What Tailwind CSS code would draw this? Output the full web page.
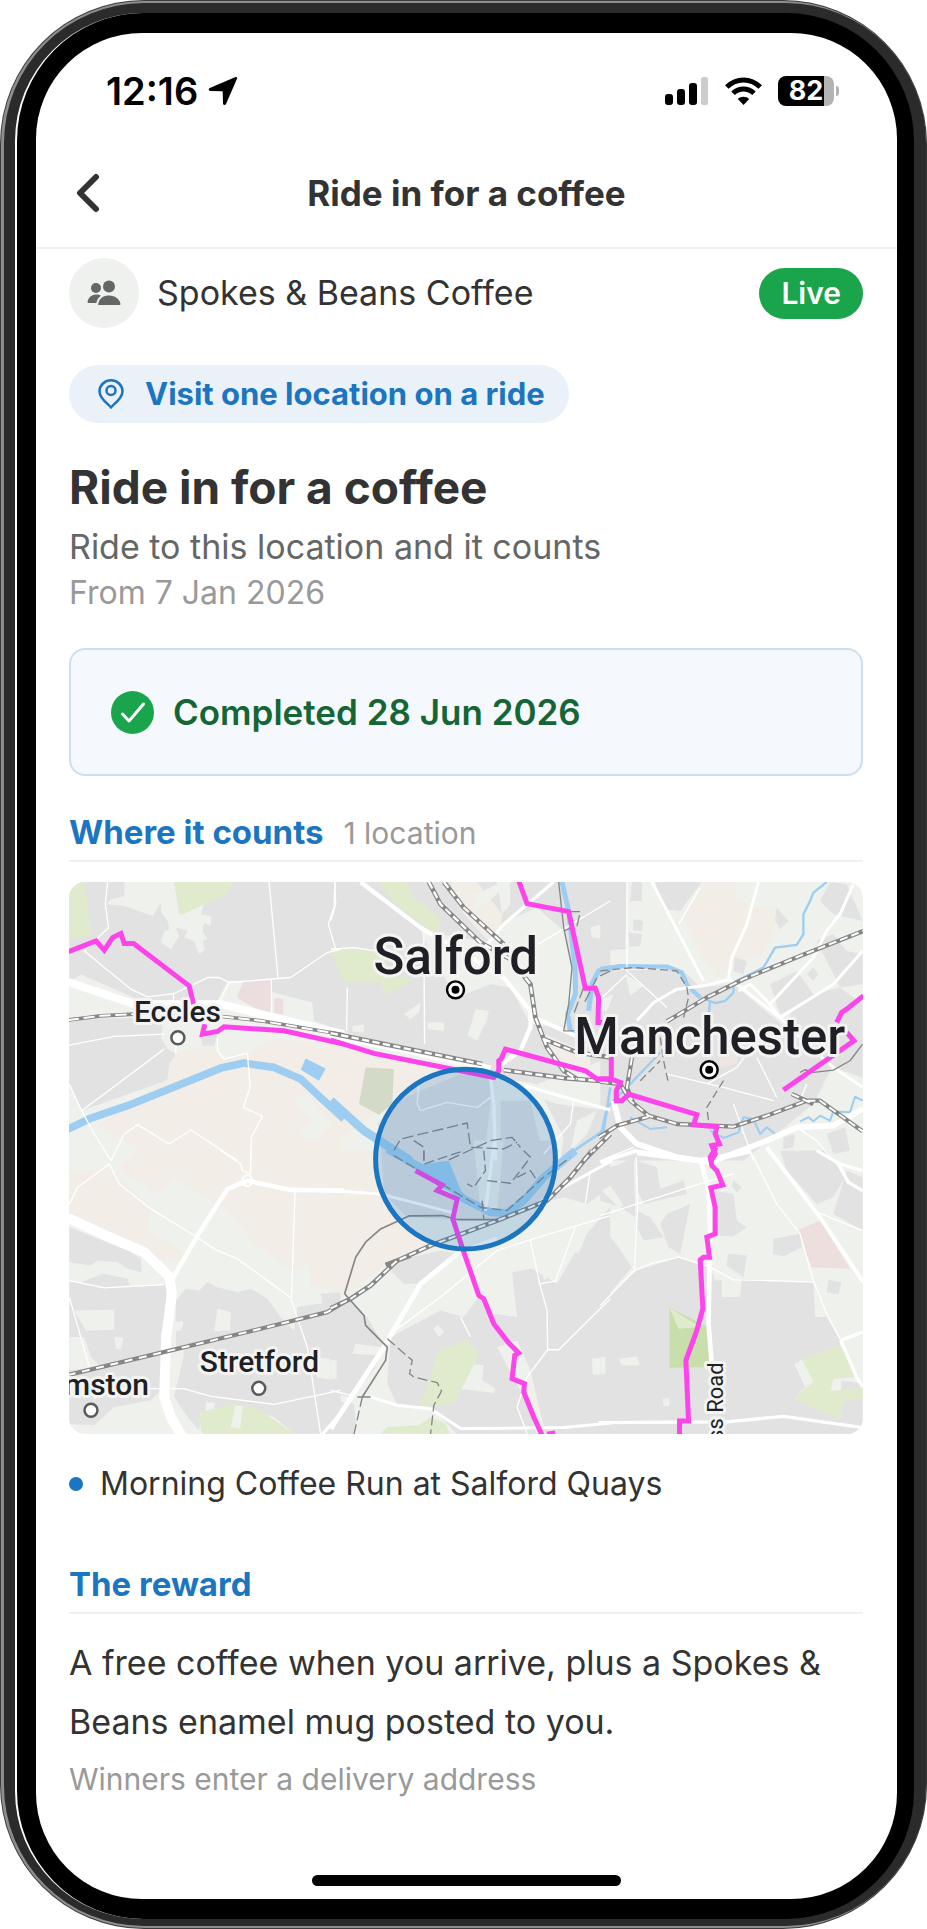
<!DOCTYPE html>
<html lang="en">

<head>
  <meta charset="UTF-8">
  <meta name="viewport" content="width=device-width, initial-scale=1.0">
  <title>Ride in for a coffee</title>
  <script src="https://cdn.jsdelivr.net/npm/@tailwindcss/browser@4"></script>
</head>

<body class="bg-white font-['Inter',sans-serif] text-[#333333]">
  <!-- phone frame, from the outer edge in -->
  <div class="flex min-h-screen rounded-[144px] bg-[#3c3c3c] p-px">
    <div class="flex flex-1 rounded-[143px] bg-[#8d8d8d] pt-[2px] pb-[2px] pl-[3px]">
      <div class="flex flex-1 rounded-[140px] bg-[#2b2b2b] pt-[10px] pr-3 pb-[7px] pl-[11px]">
        <div class="flex flex-1 rounded-[128px] border-l-2 border-white bg-black pt-5 pr-[17px] pb-5 pl-[19px]">
          <div class="flex w-full min-w-0 flex-col overflow-hidden rounded-[106px] bg-white">

            <div class="flex items-center justify-between pt-[34px] pr-[58px] pl-[70px] text-black">
              <div class="flex items-center gap-[10px]">
                <span class="text-[38px] leading-[48px] font-semibold">12:16</span>
                <svg class="h-[30px] w-[30px]" viewBox="0 0 30 30" fill="currentColor">
                  <path d="M27.500 1 C28.800.6 29.500 1.500 29 2.800 L18 28 C17.300 29.600 15.200 29.400 15 27.600 L14.700 16 C14.700 15.300 14.500 15.200 13.900 15.200 L2.400 15 C.4 15 .2 12.800 1.800 12.100 Z" />
                </svg>
              </div>
              <div class="flex items-center gap-4">
                <svg class="h-7 w-[44px]" viewBox="0 0 44 28">
                  <rect x="0" y="17" width="8" height="11" rx="3" />
                  <rect x="12" y="12" width="8" height="16" rx="3" />
                  <rect x="24" y="6" width="8" height="22" rx="3" />
                  <rect x="36" y="0" width="7" height="28" rx="2" fill="#cbcdc9" />
                </svg>
                <svg class="h-7 w-[37px]" viewBox="0 0 37 28" fill="none" stroke="#000" stroke-width="5">
                  <path d="M1.800 10 C11.500 .5 25.500 .5 35.200 10" />
                  <path d="M8 16.300 C14 10.500 23 10.500 29 16.300" />
                  <path d="M18.500 28 L12.800 22 C16 19 21 19 24.200 22 Z" fill="#000" stroke="none" />
                </svg>
                <div class="flex items-center gap-[2px]">
                  <div class="flex h-[30px] w-[56px] items-center justify-center rounded-lg bg-linear-to-r from-black from-83% to-[#b3b3b3] to-83%">
                    <span class="text-[27px] leading-[30px] font-bold text-white">82</span>
                  </div>
                  <span class="h-[10px] w-[3px] rounded-r-full bg-[#b3b3b3]"></span>
                </div>
              </div>
            </div>

            <header class="grid grid-cols-[80px_1fr_80px] items-center border-b-2 border-[#f0f1ec] pt-6">
              <button type="button" aria-label="Back" class="flex h-[108px] items-center pl-[40px]">
                <svg class="h-10 w-6" viewBox="0 0 24 40" fill="none" stroke="#333" stroke-width="6" stroke-linecap="round" stroke-linejoin="round">
                  <path d="M20 4 L4 20 L20 36" />
                </svg>
              </button>
              <p class="text-center text-[35px] leading-[48px] font-bold">Ride in for a coffee</p>
            </header>

            <main class="flex flex-col pt-[9px] pr-[34px] pl-[33px]">
              <div class="flex items-center justify-between">
                <div class="flex items-center gap-[18px]">
                  <span class="flex h-[70px] w-[70px] items-center justify-center rounded-full bg-[#eff1ee]">
                    <svg class="h-[26px] w-[34px]" viewBox="0 0 34 26" fill="#656766">
                      <circle cx="9" cy="8" r="5" />
                      <circle cx="22" cy="6.500" r="6" />
                      <path d="M11 25 C12 17.500 17 15.500 22 15.500 C28 15.500 32.500 19 33.500 24 Q33.500 25 32.500 25 Z" />
                      <path d="M.5 22 C1 17.500 5 14.500 9 14.500 C11 14.500 13 15 14 15.800 C11.500 17.500 10 19.800 9.300 23 H1.500 Q.5 23 .5 22 Z" />
                    </svg>
                  </span>
                  <p class="text-[34px] leading-[48px]">Spokes &amp; Beans Coffee</p>
                </div>
                <span class="flex h-[51px] items-center rounded-full bg-[#1aa44b] px-[22px] text-[30px] leading-[40px] font-semibold text-white">Live</span>
              </div>

              <div class="mt-[37px] flex h-[58px] items-center gap-[21px] self-start rounded-full bg-[#eaf1f9] pr-6 pl-[29px] text-[#1b75c0]">
                <svg class="h-[30px] w-[26px]" viewBox="0 0 26 30" fill="none" stroke="currentColor" stroke-width="2.500">
                  <path d="M13 28.300 C10 25 1.500 19.500 1.500 12.500 A11.500 11.300 0 0 1 24.500 12.500 C24.500 19.500 16 25 13 28.300 Z" />
                  <circle cx="13" cy="11.500" r="4.500" />
                </svg>
                <span class="text-[31px] leading-[40px] font-bold">Visit one location on a ride</span>
              </div>

              <h1 class="mt-9 text-[46px] leading-[56px] font-bold">Ride in for a coffee</h1>
              <p class="mt-2 text-[34px] leading-[48px] text-[#656766]">Ride to this location and it counts</p>
              <p class="text-[32px] leading-[44px] text-[#999999]">From 7 Jan 2026</p>

              <div class="mt-[33px] flex h-[128px] items-center gap-[19px] rounded-2xl border-2 border-[#cbdff0] bg-[#f5f9fd] px-10">
                <svg class="h-[43px] w-[43px]" viewBox="0 0 43 43">
                  <circle cx="21.500" cy="21.500" r="21.500" fill="#1aa44b" />
                  <path d="M11.500 23 L18 30 L32.500 13" fill="none" stroke="#fff" stroke-width="3" stroke-linecap="round" stroke-linejoin="round" />
                </svg>
                <p class="text-[35px] leading-[48px] font-semibold text-[#166534]">Completed 28 Jun 2026</p>
              </div>

              <div class="mt-7 flex items-baseline gap-5 border-b-2 border-[#f0f0ec]">
                <h2 class="text-[33px] leading-[56px] font-bold text-[#1b75c0]">Where it counts</h2>
                <span class="text-[30px] leading-[40px] text-[#999999]">1 location</span>
              </div>

              <div class="mt-5 overflow-hidden rounded-2xl">
                <svg class="block h-auto w-full bg-[#eef1ec]" viewBox="0 0 795 553" font-family="Roboto, sans-serif">
                  <defs>
                    <g id="areas-nw">
                      <path fill="#e2e2e2" d="M25 33H840V480L760 450 755 395 640 365 560 330 500 330 470 390 300 400 230 385 60 310 25 340Z" />
                      <path fill="#eef1ec" d="M190 33H340L355 130 430 100 420 130 450 135 450 165 430 155 425 180 440 205 425 210 432 235 415 250 400 210 370 200 380 180 345 170 355 195 330 235 300 215 310 180 325 175 320 150 300 120 300 95 275 135 190 105 135 100 150 85 190 75ZM25 330L60 315 120 365 160 375 220 410 25 440Z" />
                      <path fill="#e0ebcd" d="M25 33H70L92 190 25 205ZM340 33H520L490 75 360 132ZM800 245L840 235V320Z" />
                      <path fill="#e2e2e2" d="M25 445L300 440 305 475 300 500 320 535 345 548 330 600 330 625 62 720 25 640ZM420 495L470 490 460 525 425 525Z" />
                      <path fill="#f2ede6" d="M345 548L400 530 460 535 485 565 560 545 640 505 840 525V870H260L240 835 110 765 320 625 325 580Z" />
                      <path fill="#eef1ec" d="M700 690L740 660 780 720 820 760 760 820 715 790 750 750Z" />
                      <path fill="#ecdede" d="M530 370L550 330 632 325V425L590 415 535 385ZM640 382L668 384 668 430 640 428Z" />
                    </g>
                    <g id="areas-n">
                      <path fill="#e2e2e2" d="M0 33H840V560L620 640 500 620 0 470Z" />
                      <path fill="#f2ede6" d="M360 33H440L515 130 510 180 480 215 400 130Z" />
                      <path fill="#eef1ec" d="M480 215L530 150 620 110 700 180 730 330 720 470 600 460 540 350 480 340 380 380 330 300 270 180ZM500 33L540 33 540 100 515 130Z" />
                      <path fill="#e0ebcd" d="M140 33H225L250 80 330 140 322 180 300 182 190 95ZM0 240L70 230 160 250 180 315 245 320 240 335 165 372 150 335 40 335Z" />
                      <path fill="#eef1ec" d="M435 70L500 40 510 60 470 95 430 125ZM220 430L270 395 265 425 240 445ZM290 455H340V480L292 475ZM435 415L475 420 470 445 440 510 412 495ZM65 465L100 462 100 485 65 482ZM780 170L840 150V205L785 200Z" />
                      <path fill="#f2ede6" d="M0 510L390 610 200 690 120 740 0 830ZM620 480L780 550V600L700 610Z" />
                      <path fill="#d3dac8" d="M105 590L190 595 185 700 145 732 85 700Z" />
                      <path fill="#e2e2e2" d="M390 610L480 620 480 700 460 870H170L140 760 200 690ZM510 640L680 700 840 720V870H510Z" />
                      <path fill="#eef1ec" d="M480 610L620 645 700 800 690 870 640 860 600 690 510 690ZM740 750L800 720 770 790 720 840Z" />
                    </g>
                    <g id="areas-ne">
                      <path fill="#e2e2e2" d="M0 33H80L75 235 0 240ZM95 33H125V90H90ZM165 33H305L240 120 190 115ZM100 145L128 150 125 180 98 178ZM85 185L125 190 120 225 88 228Z" />
                      <path fill="#f2ede6" d="M310 33H410L400 80 470 110 530 115 525 180 490 250 430 265 350 320 310 260 250 140Z" />
                      <path fill="#e2e2e2" d="M0 300L200 295 260 310 300 350 400 340 520 440 620 520 700 580 640 700 430 870H0Z" />
                      <path fill="#e2e2e2" d="M530 110L565 150 540 175 525 150ZM405 260L440 270 430 310 400 300ZM690 33L740 40 788 150 700 130 660 90ZM650 210L700 190 740 240 788 250V340L720 350 690 290ZM510 340L590 300 640 370 580 410 540 430ZM620 310L640 290 655 310 640 330ZM600 380L720 350 788 400V620L730 600 640 560 560 450ZM680 790L735 770 750 840 700 850ZM550 800L585 790 580 830 550 835Z" />
                      <path fill="#ece7e3" d="M350 460L420 500 410 580 360 590Z" />
                      <path fill="#eef1ec" d="M75 310L130 345 90 375ZM0 385L40 370 20 420 0 420Z" />
                    </g>
                    <g id="areas-sw">
                      <path fill="#f2ede6" d="M170 50L260 -30 840 -30V425L750 405V335L690 360 570 270 520 200 470 160 340 85 290 130ZM25 70L140 50 210 110 270 180 260 235 365 305 360 330 280 325 25 190Z" />
                      <path fill="#eef1ec" d="M340 85L290 140 265 235 400 270Z" />
                      <path fill="#e2e2e2" d="M25 230L200 300 240 325 242 365 200 355 170 335 110 330 90 345 25 335ZM25 390L60 395 125 370 200 385 205 405 315 400 318 460 300 560V720L270 750 160 770 100 825 25 822ZM345 450L375 415 415 420 440 395 470 410 530 425 570 415 620 445 660 500 700 540 710 470 840 450V852H700L640 800 520 760 420 790 415 840 380 800 340 740 350 690 370 600 345 590ZM780 430L840 425V450L785 460Z" />
                      <path fill="#eef1ec" d="M40 480L160 478V538L75 540ZM25 560L70 560 90 620 120 650 25 660ZM470 475L510 485 508 540 460 542ZM335 515L368 512 362 540 335 542ZM768 620L830 630 825 690 768 682ZM325 620L370 612 350 697 325 700ZM160 560L187 562 180 598 165 595ZM435 755L462 757 460 785 435 785Z" />
                      <path fill="#e0ebcd" d="M412 800L440 780 525 760 600 780 700 852H425Z" />
                      <path fill="#eef1ec" d="M523 765L545 768 538 835 510 830Z" />
                    </g>
                    <g id="areas-s">
                      <path fill="#f2ede6" d="M0 0H150L160 120 200 200 310 270 180 330 50 430 0 425Z" />
                      <path fill="#e2e2e2" d="M150 -30L680 -30 660 150 520 205 410 210 230 200 160 130ZM0 480L60 450 110 500 160 590 130 660 60 740 0 725ZM200 330L330 300 380 310 270 400 220 400 180 360ZM400 500L445 440 490 490 560 500 545 365 605 355 680 400 760 260 840 170V852H380L300 770 200 765 170 700 180 560 330 480ZM700 0H840V110L770 160 700 140 660 150ZM0 750L70 760 75 815 70 852H0Z" />
                      <path fill="#eef1ec" d="M430 -30L520 -30 500 180 450 180ZM420 640L460 645 455 690 495 715 490 728 390 715ZM785 625L823 622 825 673 787 673ZM308 535L322 523 342 545 325 560ZM630 300L690 290 695 350 640 390ZM195 787L243 790 248 852H195ZM500 590L560 570 600 660 640 830 620 852 580 740ZM710 250L775 235 745 310 710 290ZM75 580L150 590 145 615 65 610ZM0 630H18V685H0ZM440 370Q470 350 478 375L455 410Z" />
                      <path fill="#e0ebcd" d="M320 605L408 567 447 610 370 760 265 770 300 680ZM150 850L170 830 265 825 300 800 345 820 358 852Z" />
                    </g>
                    <g id="areas-se">
                      <path fill="#e2e2e2" d="M0 60L60 40 100 20 105 200 60 170 0 150ZM110 30L170 50 180 115 250 90 260 130 130 160 112 120ZM110 180L150 200 190 260 130 270 110 230ZM200 190L270 160 240 310 205 290 180 220ZM0 230L40 270 95 350 0 460ZM0 460L110 360 235 320 330 350 345 390 365 390V440H420L425 385 640 395 645 500 680 500 720 570V590L600 630 585 650 640 690 580 745 720 805 725 690 788 700V852H0ZM385 310L440 315 430 380 378 345ZM340 120L400 130 410 210 440 230 400 258 345 255ZM540 0H680L735 80 700 140 650 160 560 60ZM740 60L788 80V240L700 190ZM520 265L600 250 605 290 550 318 518 310ZM685 388L725 395 715 432 680 425ZM400 90L425 110 410 125 395 108Z" />
                      <path fill="#eef1ec" d="M5 120L30 105 70 165 55 170ZM55 625L110 618 118 645 65 645ZM0 620H15V670H0ZM188 745L207 743 208 767H190ZM583 640L605 632 640 690 615 710Z" />
                      <path fill="#ecdfde" d="M590 240L660 210 750 355 635 350Z" />
                      <path fill="#c8dfab" d="M208 472L325 530 328 650 208 652Z" />
                      <path fill="#e0ebcd" d="M208 472L300 530 235 535ZM605 625L730 582 770 680 700 685 692 722 788 712V745L730 755 718 808 580 745 640 695Z" />
                    </g>
                  </defs>

                  <!-- land use -->
                  <use href="#areas-nw" transform="translate(-8 -11) scale(.3333)" />
                  <use href="#areas-n" transform="translate(262 -11) scale(.3333)" />
                  <use href="#areas-ne" transform="translate(532 -11) scale(.3333)" />
                  <use href="#areas-sw" transform="translate(-8 269) scale(.3333)" />
                  <use href="#areas-s" transform="translate(262 269) scale(.3333)" />
                  <use href="#areas-se" transform="translate(532 269) scale(.3333)" />

                  <!-- water -->
                  <g fill="none" stroke="#9dcdf1" stroke-linejoin="round">
                    <g transform="translate(-8 -11) scale(.3333)">
                      <path stroke-width="23" d="M20 776L90 742 200 705 480 592 550 577 640 590 720 625 790 690 850 745" />
                      <path fill="#9dcdf1" stroke="none" d="M735 563L795 593 775 630 720 597Z" />
                    </g>
                    <g transform="translate(262 -11) scale(.3333)">
                      <path stroke-width="26" d="M0 690L100 780 170 825 240 870" />
                      <path stroke-width="15" d="M695 33L715 120 735 300 735 370 712 430 720 480 740 490M845 290L805 300 785 340 775 420" />
                      <path stroke-width="8" d="M840 650L820 780 690 868" />
                    </g>
                    <g transform="translate(532 -11) scale(.3333)">
                      <path stroke-width="13" d="M0 294L60 286 200 287 245 305 262 345 300 380" />
                      <path stroke-width="7" d="M300 380L345 397 375 390 400 365 400 335 490 290 525 230 590 222 610 190V130L630 90 640 65 680 33M330 390L325 440M180 545L90 640 20 710 0 800" />
                      <path stroke-width="6" d="M788 690L765 678 750 725 700 722 690 750 660 735 640 752 625 740 600 752M525 790L500 770 480 790 460 745 430 740 415 785 370 802 330 780M200 770L150 775 90 740" />
                    </g>
                    <g transform="translate(262 269) scale(.3333)">
                      <path stroke-width="24" d="M170 -5L260 45 330 80 400 145 480 185 530 187 580 150 640 80 735 0" />
                      <path fill="#9dcdf1" stroke="none" d="M240 45L355 30 375 80 400 140 330 110Z" />
                    </g>
                  </g>

                  <!-- roads -->
                  <g fill="none" stroke="#ffffff" stroke-linejoin="round">
                    <g transform="translate(-8 -11) scale(.3333)">
                      <path stroke-width="24" d="M20 333L220 400 480 400 600 430 850 490" />
                      <path stroke-width="4" d="M140 33L133 100 143 170 70 240 210 355 260 378 340 368 440 320 475 320 505 335 690 320 800 245 840 235M625 33L652 320M823 33L820 110 803 160 825 235M632 325V430M505 335L475 395M338 368V400M25 523L160 497 310 490M310 535L62 720 25 640M62 720L100 790 150 870 190 790 230 762 325 820 390 778 530 870M470 500V540L490 565 560 547 568 650 548 710 605 737 572 800 570 870M345 548V520" />
                    </g>
                    <g transform="translate(262 -11) scale(.3333)">
                      <path stroke-width="13" d="M90 33L270 170 520 320 600 420 600 470 570 540 500 590M610 440L760 505" />
                      <path stroke-width="22" d="M0 493L240 540 480 595" />
                      <path stroke-width="10" d="M580 645L840 718M670 33L520 160 470 220M480 620L490 700 495 870" />
                      <path stroke-width="4" d="M12 33L15 100 0 150M0 235L70 230 135 240M280 190L282 520M50 350L48 480M540 270L690 180 840 90M265 640L260 700 270 720 350 695 440 710 480 680M730 690L720 760 640 850" />
                    </g>
                    <g transform="translate(532 -11) scale(.3333)">
                      <path stroke-width="9" d="M155 33L310 330M475 33L440 160 395 260 385 320M760 40L720 130 680 180 640 260 510 400M788 240L700 340 540 440M110 450L160 395 230 355 310 345 390 325 540 440 620 520 700 590 788 650M415 360L450 340 500 390 540 440" />
                      <path stroke-width="17" d="M40 690L60 770 110 820 230 860 330 875 500 810 590 770 700 765 788 715" />
                      <path stroke-width="4" d="M80 33V300L200 410M300 50L235 160M0 385L80 310M200 610L370 650 520 690M470 560L530 680M400 700L460 870M320 640L410 590 500 470M0 870L100 830M620 640L600 690M590 770L650 810 700 870" />
                    </g>
                    <g transform="translate(-8 269) scale(.3333)">
                      <path stroke-width="30" d="M20 202L150 262 250 305 325 378 333 430 316 560 310 740 330 800 370 870" />
                      <path stroke-width="14" d="M335 385L410 255 500 115 560 90 690 118 850 120" />
                      <path stroke-width="4" d="M25 160L50 110 145 40 175 100 270 175 400 255 460 295 530 325 688 440M703 120L692 450 740 590 780 852M25 390L130 412 310 402M25 440L85 650M100 745L150 715 370 715 450 738 640 762 840 720M570 0V70L545 60 540 40 480 0" />
                      <path stroke-width="10" d="M785 852L840 790" />
                      <circle cx="560" cy="90" r="16" stroke-width="6" />
                    </g>
                    <g transform="translate(262 269) scale(.3333)">
                      <path stroke-width="15" d="M500 265L380 310 270 400 160 590 0 835" />
                      <path stroke-width="9" d="M0 120L150 130 380 190M120 740L200 765 300 775 390 835 700 832 845 818M845 30L700 110 620 160" />
                      <path stroke-width="4" d="M840 195L640 255 500 300 330 440 180 550M600 270L628 400 650 480 652 598 685 598 840 445M652 598L590 680 560 770 590 850M628 400L675 392 735 230M0 720L60 735M780 60L765 160M390 500L420 560" />
                      <path stroke-width="10" d="M490 -20L465 180" />
                    </g>
                    <g transform="translate(532 269) scale(.3333)">
                      <path stroke-width="17" d="M110 5L210 18 300 30 340 25 450 0" />
                      <path stroke-width="14" d="M302 30L325 120 330 250 325 520 335 645" />
                      <path stroke-width="12" d="M500 -10L660 200 790 395M0 35L110 0" />
                      <path stroke-width="10" d="M-5 817L380 815 550 798 790 832M650 0L720 40 788 60M715 40L745 95 788 120M722 570L770 680 788 710M722 570L788 545" />
                      <path stroke-width="4" d="M0 195L330 90 400 70M108 20L112 170 102 360M0 465L102 360 150 340 235 320 330 350 400 388 500 390 640 395M450 0L530 160 600 250 640 390 680 490 720 565M640 180L788 240" />
                    </g>
                  </g>

                  <!-- railways: grey casing with white sleepers over it -->
                  <g fill="none" stroke-linejoin="round">
                    <g transform="translate(-8 -11) scale(.3333)">
                      <path stroke="#868686" stroke-width="11" d="M20 448L120 435 220 430M485 437L600 450 850 492" />
                      <path stroke="#fff" stroke-width="6" stroke-dasharray="34 14" d="M20 448L120 435 220 430M485 437L600 450 850 492" />
                    </g>
                    <g transform="translate(262 -11) scale(.3333)">
                      <path stroke="#868686" stroke-width="14" d="M0 487L455 580M520 598L700 622 840 633M295 33L330 100 450 215 540 265 600 340 615 440 650 530 700 600 740 625M340 33L400 110 520 220M640 505L740 545 840 560M840 790L760 870" />
                      <path stroke="#fff" stroke-width="7" stroke-dasharray="22 10" d="M0 487L455 580M520 598L700 622 840 633M295 33L330 100 450 215 540 265 600 340 615 440 650 530 700 600 740 625M340 33L400 110 520 220M640 505L740 545 840 560M840 790L760 870" />
                      <path stroke="#868686" stroke-width="4" d="M685 33L700 170 725 290 715 400 700 480H730" />
                      <path stroke="#868686" stroke-width="4" stroke-dasharray="34 12" d="M715 122H750L740 165 700 180M760 350L730 430M840 300L800 320 760 400M355 868L480 810 545 800 570 830M190 840L210 805 410 757 420 830 520 835 560 815M250 810L280 830V870" />
                    </g>
                    <g transform="translate(532 -11) scale(.3333)">
                      <path stroke="#868686" stroke-width="13" d="M0 633L60 640 90 690 145 735 230 760 400 768 500 735 620 690 660 690 788 782M-5 800L50 765 145 738M200 452L320 380 430 325 600 255 790 180M95 560L80 650 100 700M575 670L640 700" />
                      <path stroke="#fff" stroke-width="6" stroke-dasharray="24 12" d="M0 633L60 640 90 690 145 735 230 760 400 768 500 735 620 690 660 690 788 782M-5 800L50 765 145 738M200 452L320 380 430 325 600 255 790 180M95 560L80 650 100 700M575 670L640 700" />
                      <path stroke="#868686" stroke-width="4" d="M600 605L615 597 640 605 700 598 750 570 788 520" />
                      <path stroke="#868686" stroke-width="4" stroke-dasharray="24 12" d="M0 300L100 290 230 300 260 350 265 380 250 440M180 500L190 570 205 640M370 630L320 710 325 750M120 630L180 570" />
                    </g>
                    <g transform="translate(-8 269) scale(.3333)">
                      <path stroke="#868686" stroke-width="13" d="M20 674L330 600 600 535 800 485 850 455" />
                      <path stroke="#fff" stroke-width="6" stroke-dasharray="24 20" d="M20 674L330 600 600 535 800 485 850 455" />
                    </g>
                    <g transform="translate(262 269) scale(.3333)">
                      <path stroke="#868686" stroke-width="14" d="M0 474L60 445 120 405 200 330 300 285 500 210 650 150 720 80 785 0M165 343L240 315" />
                      <path stroke="#fff" stroke-width="6" stroke-dasharray="22 10" d="M0 474L60 445 120 405 200 330 300 285 500 210 650 150 720 80 785 0" />
                      <path stroke="#868686" stroke-width="5" d="M500 207H380L335 195 235 196 150 235 105 275 75 320 42 430 100 495 105 525 170 590 165 630 95 740M80 740H120" />
                      <path stroke="#868686" stroke-width="4" stroke-dasharray="30 12" d="M95 740L70 852M170 565L245 630 237 670 250 680 320 697 333 722 310 765 300 852M190 15L450 170 530 180 640 80 720 20M280 0V40L400 0M460 0L465 60 430 110 410 100M470 90L540 98 570 60 600 20 580 0M455 150L460 205M560 80L600 60 620 90" />
                    </g>
                  </g>

                  <!-- cycle routes -->
                  <g fill="none" stroke="#fd43ea" stroke-width="15">
                    <path transform="translate(-8 -11) scale(.3333)" d="M22 242L105 210 130 238 155 200 180 188 190 218H218L385 345 398 400M432 460L425 490 470 482 490 468 670 480 850 520" />
                    <path transform="translate(262 -11) scale(.3333)" d="M0 508L130 548 490 620 505 600V570L512 565 525 535 765 600 800 625H845M565 30L590 98 715 122 765 352H795L805 380 803 455H820" />
                    <path transform="translate(532 -11) scale(.3333)" d="M-5 625H33L60 635 48 660V690H65L85 670 290 732 280 762 350 768 345 790 358 820 335 825 345 850 333 870M33 520V625M790 375L740 415 725 425 710 455M740 485L762 510 550 658" />
                    <path transform="translate(262 269) scale(.3333)" d="M255 60L335 103 320 120 380 145 367 205 400 305 445 435 460 445 490 520 535 578 565 608 553 615 545 685 582 700 580 725 610 800 635 855M650 852L675 848" />
                    <path transform="translate(532 269) scale(.3333)" d="M348 -10L330 20 335 45 350 60 368 103 332 112 345 170V250L320 260 328 320H310L300 328 308 475 290 540 257 630 265 812H238V855" />
                  </g>

                  <circle cx="397" cy="277.500" r="90" fill="#1b75c0" fill-opacity=".2" stroke="#1b75c0" stroke-width="5" />

                  <!-- places -->
                  <g fill="#fff" stroke="#5a5a5a" stroke-width="2.500">
                    <circle cx="109" cy="156" r="6.500" />
                    <circle cx="190" cy="507" r="6.500" />
                    <circle cx="22" cy="529" r="6.500" />
                    <circle cx="387" cy="108" r="8.500" stroke="#000" />
                    <circle cx="641" cy="188" r="8.500" stroke="#000" />
                  </g>
                  <circle cx="387" cy="108" r="4" />
                  <circle cx="641" cy="188" r="4" />
                  <g fill="#1f1f25" stroke="#f3f4f1" stroke-width="6" stroke-linejoin="round" paint-order="stroke" font-weight="500">
                    <text x="305" y="92" font-size="51">Salford</text>
                    <text x="506" y="172" font-size="51">Manchester</text>
                    <text x="65" y="140" font-size="30">Eccles</text>
                    <text x="131" y="491" font-size="30">Stretford</text>
                    <text x="80" y="514" font-size="30" text-anchor="end">mston</text>
                    <text transform="translate(655 481) rotate(-90)" font-size="22" font-weight="400" text-anchor="end">ss Road</text>
                  </g>
                </svg>
              </div>

              <ul class="mt-[26px]">
                <li class="flex items-center gap-[17px] text-[32px] leading-[48px]">
                  <span class="h-[14px] w-[14px] rounded-full bg-[#1b75c0]"></span>
                  Morning Coffee Run at Salford Quays
                </li>
              </ul>

              <h2 class="mt-12 border-b-2 border-[#f0f0ec] text-[33px] leading-[56px] font-bold text-[#1b75c0]">The reward</h2>
              <p class="mt-[19px] text-[34px] leading-[59px]">A free coffee when you arrive, plus a Spokes &amp; Beans enamel mug posted to you.</p>
              <p class="mt-[6px] text-[30px] leading-[44px] text-[#999999]">Winners enter a delivery address</p>
            </main>

            <div class="mt-auto flex justify-center pb-[13px]">
              <span class="h-[11px] w-[36%] rounded-full bg-black"></span>
            </div>
          </div>
        </div>
      </div>
    </div>
  </div>
</body>

</html>
